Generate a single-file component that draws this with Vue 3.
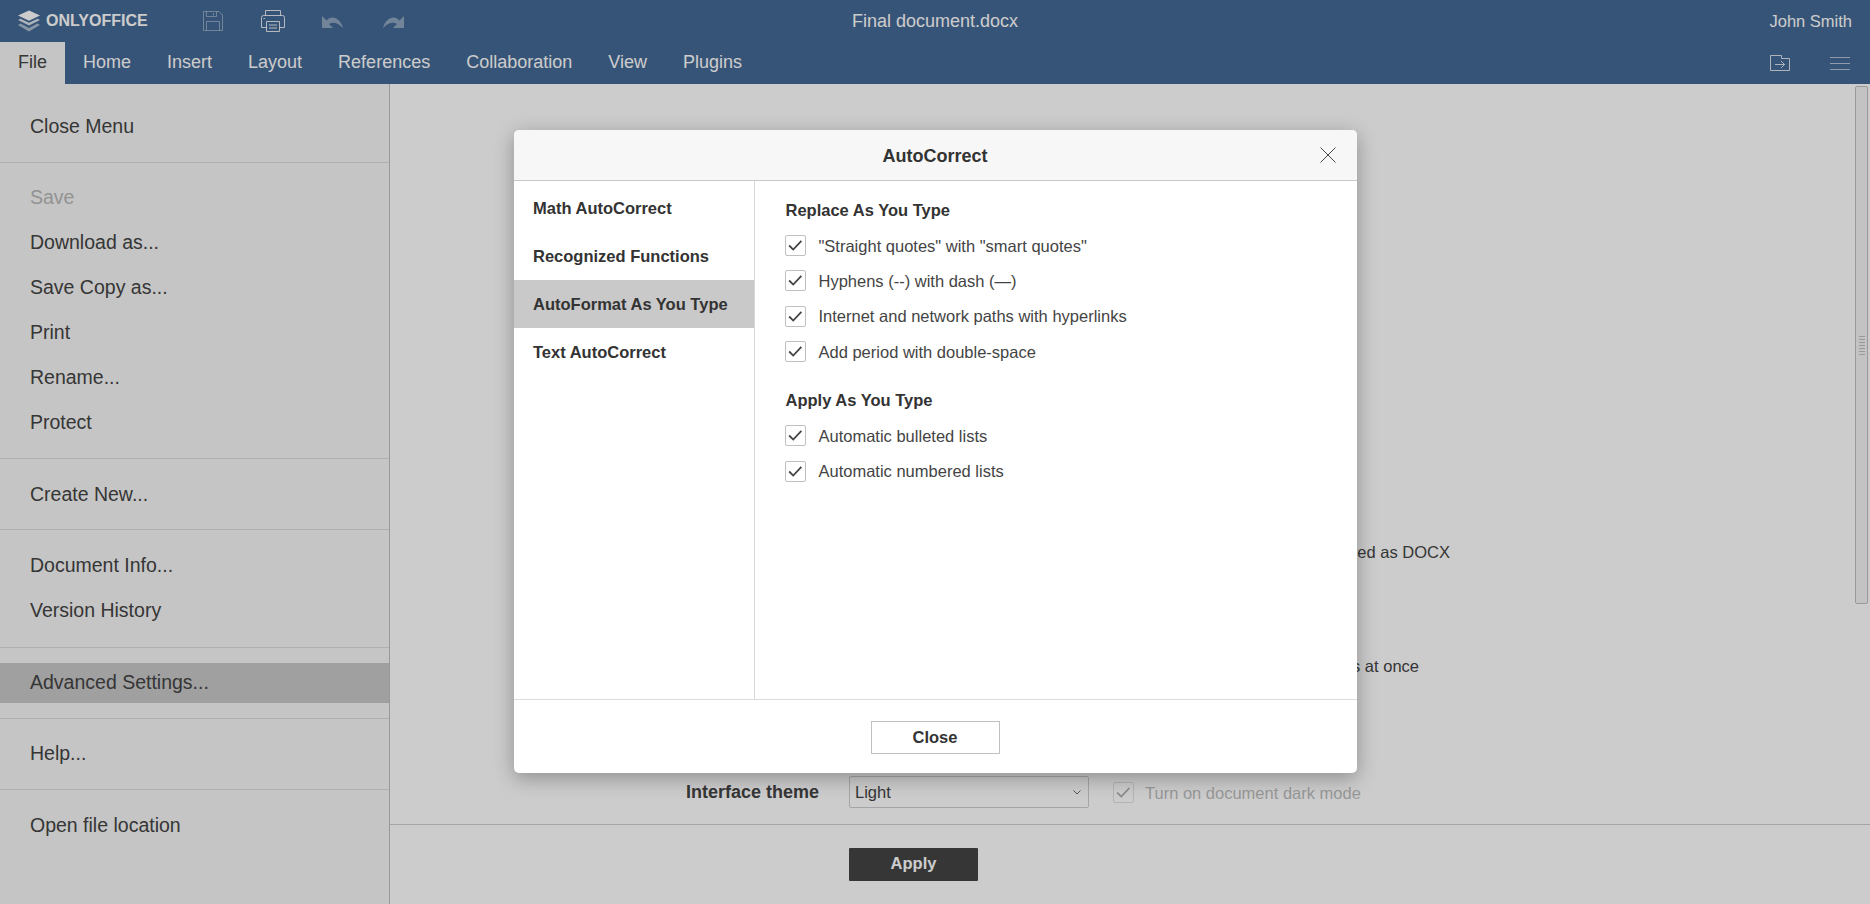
<template>
  <div class="app">
    <header class="topbar">
      <div class="titlebar">
        <div class="logo">
          <svg class="logo-mark" viewBox="0 0 24 22">
            <path d="M12 0.5 23 5.6 12 10.8 1 5.6Z" fill="#fff" />
            <path d="M3.6 8.8 1 10.1 12 15.4 23 10.1 20.4 8.8 12 12.8Z" fill="#fff" opacity="0.8" />
            <path d="M3.6 13.6 1 14.9 12 21.5 23 14.9 20.4 13.6 12 18Z" fill="#fff" opacity="0.55" />
          </svg>
          <span class="logo-text">ONLYOFFICE</span>
        </div>
        <div class="quick-tools">
          <svg class="tool tool-save" viewBox="0 0 20 20" fill="none" stroke="#fff" stroke-opacity="0.4">
            <path d="M0.5 0.5H16L19.5 4V19.5H0.5Z" />
            <path d="M3.5 0.5V5.5H13.5V0.5M10.5 2V4.5" />
            <path d="M3.5 19.5V10.5H16.5V19.5" />
          </svg>
          <svg class="tool tool-print" viewBox="0 0 24 22" fill="none" stroke="#fff" stroke-opacity="0.85">
            <path d="M4.5 5.5V0.5H19.5V5.5" />
            <path d="M5.5 17.5H0.5V7.5Q0.5 5.5 2.5 5.5H21.5Q23.5 5.5 23.5 7.5V17.5H18.5" />
            <path d="M5.5 11.5H18.5V21.5H5.5Z" />
            <path d="M8 15H16M8 18H16M2.5 8.5H4" />
          </svg>
          <svg class="tool tool-undo" viewBox="0 0 21 13">
            <path d="M0 1V13H11L7 9C11 6.5 16 8 21 13C19 4 10 -1 4.5 5.5Z" fill="#fff" opacity="0.4" />
          </svg>
          <svg class="tool tool-redo" viewBox="0 0 21 13">
            <path d="M21 1V13H10L14 9C10 6.5 5 8 0 13C2 4 11 -1 16.5 5.5Z" fill="#fff" opacity="0.4" />
          </svg>
        </div>
        <div class="doc-title">Final document.docx</div>
        <div class="user-name">John Smith</div>
      </div>
      <nav class="tabs">
        <div
          v-for="tab in tabs"
          :key="tab"
          class="tab"
          :class="{ 'tab--active': tab === 'File' }"
        >{{ tab }}</div>
        <div class="tab-tools">
          <svg class="folder-icon" viewBox="0 0 20 16" fill="none" stroke="#fff" stroke-opacity="0.8">
            <path d="M0.5 0.5H11.5V3.5H19.5V15.5H0.5Z" />
            <path d="M5 9.5H14.5M11 6 14.5 9.5 11 13" />
          </svg>
          <div class="burger">
            <span></span>
            <span></span>
            <span></span>
          </div>
        </div>
      </nav>
    </header>

    <main class="workspace">
      <aside class="file-menu">
        <div v-for="(group, i) in menuGroups" :key="i" class="menu-group">
          <div
            v-for="item in group"
            :key="item"
            class="menu-item"
            :class="{
              'menu-item--disabled': item === 'Save',
              'menu-item--active': item === 'Advanced Settings...',
            }"
          >{{ item }}</div>
        </div>
      </aside>

      <section class="settings">
        <div class="settings-form">
          <div class="setting-row">
            <div class="setting-label"></div>
            <div class="setting-note setting-note--compat">Make the files compatible with older MS Word versions when saved as DOCX</div>
          </div>
          <div class="setting-row setting-row--changes">
            <div class="setting-label"></div>
            <div class="setting-note setting-note--changes">Apply all of the changes at once</div>
          </div>
          <div class="setting-row setting-row--theme">
            <div class="setting-label">Interface theme</div>
            <div class="theme-select">
              <span>Light</span>
              <svg class="chevron" viewBox="0 0 8 5" fill="none" stroke="#444" stroke-width="0.8">
                <path d="M0.5 0.5 4 4 7.5 0.5" />
              </svg>
            </div>
            <span class="checkbox checkbox--disabled">
              <svg viewBox="0 0 21 21" fill="none" stroke="#444" stroke-width="1.8">
                <path d="M3.5 10.5 8 15 17 5.5" />
              </svg>
            </span>
            <span class="dark-label">Turn on document dark mode</span>
          </div>
        </div>
        <div class="apply-bar">
          <button class="apply-btn">Apply</button>
        </div>
        <div class="scrollbar">
          <div class="grip">
            <span v-for="n in 7" :key="n"></span>
          </div>
        </div>
      </section>
    </main>

    <div class="mask">
      <div class="modal">
        <div class="modal-head">
          <span class="modal-title">AutoCorrect</span>
          <svg class="modal-close" viewBox="0 0 16 16" fill="none" stroke="#444">
            <path d="M0.5 0.5 15.5 15.5M15.5 0.5 0.5 15.5" />
          </svg>
        </div>
        <div class="modal-body">
          <div class="side-tabs">
            <div
              v-for="tab in sideTabs"
              :key="tab"
              class="side-tab"
              :class="{ 'side-tab--active': tab === 'AutoFormat As You Type' }"
            >{{ tab }}</div>
          </div>
          <div class="options">
            <div v-for="section in sections" :key="section.title" class="option-section">
              <div class="option-title">{{ section.title }}</div>
              <label v-for="opt in section.options" :key="opt" class="option">
                <span class="checkbox">
                  <svg viewBox="0 0 21 21" fill="none" stroke="#444" stroke-width="2">
                    <path d="M3.5 10.5 8 15 17 5.5" />
                  </svg>
                </span>
                <span class="option-text">{{ opt }}</span>
              </label>
            </div>
          </div>
        </div>
        <div class="modal-foot">
          <button class="close-btn">Close</button>
        </div>
      </div>
    </div>
  </div>
</template>

<script setup>
const tabs = ['File', 'Home', 'Insert', 'Layout', 'References', 'Collaboration', 'View', 'Plugins']

const menuGroups = [
  ['Close Menu'],
  ['Save', 'Download as...', 'Save Copy as...', 'Print', 'Rename...', 'Protect'],
  ['Create New...'],
  ['Document Info...', 'Version History'],
  ['Advanced Settings...'],
  ['Help...'],
  ['Open file location'],
]

const sideTabs = ['Math AutoCorrect', 'Recognized Functions', 'AutoFormat As You Type', 'Text AutoCorrect']

const sections = [
  {
    title: 'Replace As You Type',
    options: [
      '"Straight quotes" with "smart quotes"',
      'Hyphens (--) with dash (—)',
      'Internet and network paths with hyperlinks',
      'Add period with double-space',
    ],
  },
  {
    title: 'Apply As You Type',
    options: ['Automatic bulleted lists', 'Automatic numbered lists'],
  },
]
</script>

<style>
html,
body {
  margin: 0;
  overflow: hidden;
}
</style>

<style scoped>
.app {
  position: relative;
  display: flex;
  flex-direction: column;
  width: 1870px;
  height: 904px;
  overflow: hidden;
  background: #fff;
  color: #444;
  font-family: "Liberation Sans", Arial, sans-serif;
  font-size: 16.5px;
}

/* Header */
.topbar {
  background: #446995;
  color: #fff;
  flex-shrink: 0;
}

.titlebar {
  position: relative;
  display: flex;
  align-items: center;
  height: 42px;
}

.logo {
  display: flex;
  align-items: center;
  gap: 5px;
  margin-left: 17px;
  width: 186px;
}

.logo-mark {
  width: 24px;
  height: 22px;
}

.logo-text {
  font-size: 16px;
  font-weight: 700;
}

.quick-tools {
  display: flex;
  align-items: center;
}

.tool-save {
  width: 20px;
  height: 20px;
  margin-right: 38px;
}

.tool-print {
  width: 24px;
  height: 22px;
  margin-right: 37px;
}

.tool-undo {
  width: 21px;
  height: 13px;
  margin-right: 40px;
}

.tool-redo {
  width: 21px;
  height: 13px;
}

.doc-title {
  position: absolute;
  left: 0;
  right: 0;
  text-align: center;
  font-size: 18px;
  pointer-events: none;
}

.user-name {
  margin-left: auto;
  margin-right: 18px;
}

.tabs {
  display: flex;
  height: 42px;
}

.tab {
  display: flex;
  align-items: center;
  padding: 0 18px 2px;
  font-size: 18px;
}

.tab--active {
  background: #f7f7f7;
  color: #444;
}

.tab-tools {
  display: flex;
  align-items: center;
  margin-left: auto;
  gap: 40px;
  padding-right: 20px;
}

.folder-icon {
  width: 20px;
  height: 16px;
}

.burger {
  display: flex;
  flex-direction: column;
  gap: 5px;
  width: 20px;
}

.burger span {
  display: block;
  height: 1px;
  background: #fff;
  opacity: 0.6;
}

/* Main area */
.workspace {
  display: flex;
  flex: 1;
  min-height: 0;
}

.file-menu {
  flex: 0 0 389px;
  padding-top: 7px;
  background: #f7f7f7;
  border-right: 1px solid #c0c0c0;
  font-size: 19.5px;
}

.menu-group {
  display: flex;
  flex-direction: column;
  gap: 5px;
  padding: 15px 0;
  border-bottom: 1px solid #dcdcdc;
}

.menu-group:first-child {
  padding-bottom: 16px;
}

.menu-group:nth-child(2) {
  padding-top: 14px;
  padding-bottom: 16px;
}

.menu-group:nth-child(4) {
  padding-bottom: 17px;
}

.menu-group:nth-child(5) .menu-item,
.menu-group:nth-child(6) .menu-item {
  padding-bottom: 2px;
}

.menu-group:last-child {
  border-bottom: none;
}

.menu-item {
  display: flex;
  align-items: center;
  box-sizing: border-box;
  height: 40px;
  padding-left: 30px;
}

.menu-item--disabled {
  color: #b8b8b8;
}

.menu-item--active {
  background: #c8c8c8;
}

/* Settings behind the dialog */
.settings {
  position: relative;
  display: flex;
  flex: 1;
  flex-direction: column;
  min-width: 0;
}

.settings-form {
  flex: 1;
  padding: 452px 0 0 229px;
}

.setting-row {
  display: flex;
  align-items: center;
  height: 32px;
}

.setting-row--changes {
  margin-top: 82px;
}

.setting-row--theme {
  margin-top: 94px;
}

.setting-label {
  flex: 0 0 200px;
  margin-right: 30px;
  text-align: right;
  font-size: 18px;
  font-weight: 700;
}

.setting-note {
  text-align: right;
  white-space: nowrap;
}

.setting-note--compat {
  width: 601px;
}

.setting-note--changes {
  width: 570px;
}

.theme-select {
  display: flex;
  align-items: center;
  justify-content: space-between;
  box-sizing: border-box;
  width: 240px;
  height: 32px;
  margin-right: 24px;
  padding: 0 7px 0 5px;
  background: #fff;
  border: 1px solid #cfcfcf;
  border-radius: 2px;
}

.chevron {
  width: 8px;
  height: 5px;
}

.checkbox {
  display: inline-flex;
  flex-shrink: 0;
  box-sizing: border-box;
  width: 21px;
  height: 21px;
  background: #fff;
  border: 1px solid #c0c0c0;
  border-radius: 2px;
}

.checkbox svg {
  width: 100%;
  height: 100%;
}

.checkbox--disabled {
  opacity: 0.45;
}

.dark-label {
  margin: 3px 0 0 11px;
  color: #444;
  opacity: 0.35;
}

.apply-bar {
  flex: 0 0 80px;
  box-sizing: border-box;
  padding: 23px 0 0 459px;
  border-top: 1px solid #d0d0d0;
}

.apply-btn {
  width: 129px;
  height: 33px;
  padding: 0 0 2px;
  background: #444;
  color: #fff;
  border: none;
  border-radius: 1px;
  font: 700 16.5px "Liberation Sans", Arial, sans-serif;
}

.scrollbar {
  position: absolute;
  top: 2px;
  right: 2px;
  display: flex;
  align-items: center;
  justify-content: center;
  box-sizing: border-box;
  width: 13px;
  height: 518px;
  background: #f4f4f4;
  border: 1px solid #c0c0c0;
  border-radius: 2px;
}

.grip {
  display: flex;
  flex-direction: column;
  gap: 2px;
  width: 6px;
}

.grip span {
  display: block;
  height: 1px;
  background: #c0c0c0;
}

/* Dialog */
.mask {
  position: absolute;
  inset: 0;
  display: flex;
  justify-content: center;
  align-items: flex-start;
  padding-top: 130px;
  background: rgba(0, 0, 0, 0.2);
}

.modal {
  display: flex;
  flex-direction: column;
  box-sizing: border-box;
  width: 843px;
  height: 643px;
  background: #fff;
  border-radius: 5px;
  box-shadow: 0 5px 20px rgba(0, 0, 0, 0.3);
  overflow: hidden;
}

.modal-head {
  position: relative;
  display: flex;
  align-items: center;
  justify-content: center;
  flex: 0 0 51px;
  box-sizing: border-box;
  padding-top: 2px;
  background: #f7f7f7;
  border-bottom: 1px solid #c8c8c8;
}

.modal-title {
  font-size: 18px;
  font-weight: 700;
  color: #333;
}

.modal-close {
  position: absolute;
  top: 17px;
  right: 21px;
  width: 16px;
  height: 16px;
}

.modal-body {
  display: flex;
  flex: 1;
  min-height: 0;
}

.side-tabs {
  flex: 0 0 241px;
  box-sizing: border-box;
  padding-top: 3px;
  border-right: 1px solid #d8d8d8;
}

.side-tab {
  display: flex;
  align-items: center;
  height: 48px;
  padding-left: 19.5px;
  font-size: 16.5px;
  font-weight: 700;
  color: #333;
}

.side-tab--active {
  background: #c9c9c9;
}

.options {
  flex: 1;
  padding: 18px 0 0 30px;
}

.option-section {
  margin-bottom: 27px;
}

.option-title {
  height: 22px;
  margin-bottom: 14px;
  padding-left: 1px;
  line-height: 22px;
  font-size: 16.5px;
  font-weight: 700;
  color: #333;
}

.option {
  display: flex;
  align-items: center;
  gap: 13px;
  height: 21px;
  margin-bottom: 14.4px;
  font-size: 16.5px;
}

.option-text {
  padding-top: 1px;
}

.modal-foot {
  flex: 0 0 74px;
  box-sizing: border-box;
  display: flex;
  justify-content: center;
  padding-top: 21px;
  border-top: 1px solid #dcdcdc;
}

.close-btn {
  width: 129px;
  height: 33px;
  padding: 0;
  background: #fff;
  color: #333;
  border: 1px solid #c0c0c0;
  font: 700 16.5px "Liberation Sans", Arial, sans-serif;
}
</style>
